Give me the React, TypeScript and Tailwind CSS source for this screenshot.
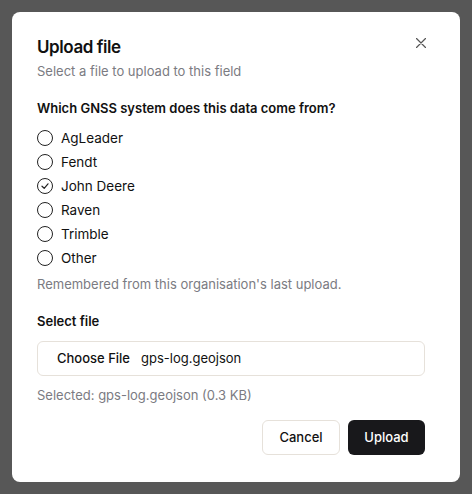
import React from "react";

const options = ["AgLeader", "Fendt", "John Deere", "Raven", "Trimble", "Other"];

function Radio({ checked }: { checked: boolean }) {
  return (
    <span className="flex h-4 w-4 shrink-0 items-center justify-center rounded-full border border-[#222] bg-white">
      {checked && (
        <svg width="10" height="10" viewBox="0 0 10 10" fill="none">
          <path d="M2 5.2 L4.2 7.3 L8 2.8" stroke="#222" strokeWidth="1.2" strokeLinecap="round" strokeLinejoin="round" />
        </svg>
      )}
    </span>
  );
}

export default function App() {
  return (
    <div
      className="flex h-[494px] w-[472px] bg-[#575757] p-3"
      style={{ fontFamily: "Inter, 'Noto Sans', sans-serif" }}
    >
      <div className="relative flex h-[470px] w-[448px] flex-col rounded-lg bg-white pl-[25px] pr-[35px] pt-[23px]">
        <button className="absolute right-[34px] top-[26px] flex h-[10px] w-[10px] items-center justify-center">
          <svg width="10" height="10" viewBox="0 0 10 10" fill="none">
            <path d="M0.5 0.5 L9.5 9.5 M9.5 0.5 L0.5 9.5" stroke="#555" strokeWidth="1.2" strokeLinecap="round" />
          </svg>
        </button>
        <h2 className="text-[17px] font-semibold leading-[24px] tracking-tight text-[#111]">Upload file</h2>
        <p className="mt-[2px] text-[13px] leading-[20px] text-[#7b7b82]">Select a file to upload to this field</p>
        <p className="mt-[17px] text-[13px] font-semibold leading-[20px] text-[#111]">
          Which GNSS system does this data come from?
        </p>
        <div className="mt-[8px] flex flex-col">
          {options.map((o) => (
            <label key={o} className="flex h-[24px] items-center gap-2 text-[13.5px] text-[#111]">
              <Radio checked={o === "John Deere"} />
              <span>{o}</span>
            </label>
          ))}
        </div>
        <p className="mt-[4px] text-[13px] leading-[20px] text-[#7b7b82]">
          Remembered from this organisation's last upload.
        </p>
        <p className="mt-[17px] text-[13px] font-semibold leading-[20px] text-[#111]">Select file</p>
        <div className="mt-[10px] flex h-[35px] items-center rounded-md border border-[#e6e1da] pl-[19px] text-[13px] text-[#111]">
          <span className="font-medium">Choose File</span>
          <span className="ml-[11px]">gps-log.geojson</span>
        </div>
        <p className="mt-[9px] text-[13px] leading-[20px] text-[#7b7b82]">Selected: gps-log.geojson (0.3 KB)</p>
        <div className="mt-[15px] flex justify-end gap-2">
          <button className="flex h-[35px] w-[78px] items-center justify-center rounded-md border border-[#e6e1da] bg-white text-[13px] font-medium text-[#111]">
            Cancel
          </button>
          <button className="flex h-[35px] w-[77px] items-center justify-center rounded-md bg-[#18181b] text-[13px] font-medium text-white">
            Upload
          </button>
        </div>
      </div>
    </div>
  );
}
